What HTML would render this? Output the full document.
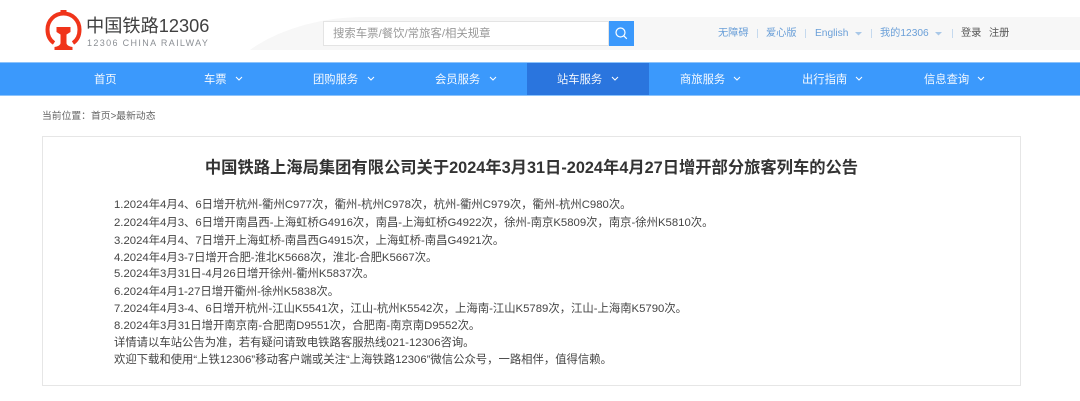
<!DOCTYPE html>
<html lang="zh"><head><meta charset="utf-8"><style>
*{margin:0;padding:0;box-sizing:border-box}
html,body{width:1080px;height:401px;overflow:hidden;background:#fff}
body{position:relative;font-family:"Liberation Sans","Noto Sans CJK SC",sans-serif;color:#333}
.a{position:absolute;white-space:nowrap}
.nav{left:0;top:62px;width:1080px;height:34px;background:#3b99fc;border-top:1px solid #8cc3fb;border-bottom:1px solid #8cc3fb}
.n{position:absolute;top:72px;color:#fff;font-size:11.3px;line-height:16px;white-space:nowrap;opacity:.95}
.c{position:absolute;top:76px}
.t{position:absolute;font-size:10.2px;line-height:14px;white-space:nowrap;top:27px;color:#6a9fd8}
.l{position:absolute;left:114px;font-size:11.35px;line-height:14px;color:#444;white-space:nowrap}
</style></head><body>
<svg class="a" style="left:45px;top:9px" width="38" height="42" viewBox="0 0 38 42"><path d="M9 34C4.500 31 2.500 26 2.500 20.500C2.500 11.500 9.500 4.500 18.500 4.500C27.500 4.500 34.500 11.500 34.500 20.500C34.500 26 32.500 31 28 34" fill="none" stroke="#f0341a" stroke-width="4"/><rect x="15.500" y="1" width="6" height="4" fill="#f0341a"/><path d="M11.500 18H25.500V23L21.500 25.500V34C21.500 36 24 37.500 27.500 38V41H9.500V38C13 37.500 15.500 36 15.500 34V25.500L11.500 23Z" fill="#f0341a"/></svg>
<div class="a" style="left:86px;top:13px;font-size:18.2px;line-height:26px;color:#404040;">中国铁路12306</div>
<div class="a" style="left:87px;top:37px;font-size:9px;line-height:12px;letter-spacing:1.36px;color:#8b8f94">12306 CHINA RAILWAY</div>
<svg class="a" style="left:245px;top:17px" width="835" height="33"><path d="M5 33C25 18 65 1 115 0H835V33Z" fill="#f7f7f7"/></svg>
<div class="a" style="left:323px;top:21px;width:286px;height:25px;background:#fff;border:1px solid #e4e4e4"></div>
<div class="a" style="left:333px;top:27px;font-size:11.4px;line-height:14px;color:#999">搜索车票/餐饮/常旅客/相关规章</div>
<div class="a" style="left:609px;top:21px;width:25px;height:25px;background:#3b99fc"></div>
<svg class="a" style="left:614px;top:26px" width="15" height="15" fill="none" stroke="#fff" stroke-width="1.200"><circle cx="6.500" cy="6.500" r="4.500"/><path d="M9.800 9.800L12.800 12.800"/></svg>
<div class="t" style="left:718px">无障碍</div><div class="t" style="left:766px">爱心版</div>
<div class="t" style="left:815px">English</div><div class="t" style="left:880px">我的12306</div>
<div class="t" style="left:961px;color:#555">登录</div><div class="t" style="left:989px;color:#555">注册</div>
<div class="a" style="left:757px;top:29px;width:1px;height:9px;background:#c5d9ee"></div><div class="a" style="left:805px;top:29px;width:1px;height:9px;background:#c5d9ee"></div><div class="a" style="left:871px;top:29px;width:1px;height:9px;background:#c5d9ee"></div><div class="a" style="left:952px;top:29px;width:1px;height:9px;background:#c5d9ee"></div>
<svg class="a" style="left:855px;top:32px" width="7" height="4"><path d="M0 0H7L3.500 3.500Z" fill="#a9c8e8"/></svg>
<svg class="a" style="left:935px;top:32px" width="7" height="4"><path d="M0 0H7L3.500 3.500Z" fill="#a9c8e8"/></svg>
<div class="a nav"></div>
<div class="a" style="left:527px;top:63px;width:122px;height:32px;background:#2a75de"></div>
<div class="n" style="left:94px">首页</div>
<div class="n" style="left:204px">车票</div><div class="n" style="left:313px">团购服务</div><div class="n" style="left:435px">会员服务</div><div class="n" style="left:557px">站车服务</div><div class="n" style="left:680px">商旅服务</div><div class="n" style="left:802px">出行指南</div><div class="n" style="left:924px">信息查询</div>
<svg class="c" style="left:235px" width="8" height="6" fill="none" stroke="#fff"><path d="M1 1L4 4L7 1"/></svg>
<svg class="c" style="left:367px" width="8" height="6" fill="none" stroke="#fff"><path d="M1 1L4 4L7 1"/></svg>
<svg class="c" style="left:489px" width="8" height="6" fill="none" stroke="#fff"><path d="M1 1L4 4L7 1"/></svg>
<svg class="c" style="left:611px" width="8" height="6" fill="none" stroke="#fff"><path d="M1 1L4 4L7 1"/></svg>
<svg class="c" style="left:733px" width="8" height="6" fill="none" stroke="#fff"><path d="M1 1L4 4L7 1"/></svg>
<svg class="c" style="left:855px" width="8" height="6" fill="none" stroke="#fff"><path d="M1 1L4 4L7 1"/></svg>
<svg class="c" style="left:977px" width="8" height="6" fill="none" stroke="#fff"><path d="M1 1L4 4L7 1"/></svg>
<div class="a" style="left:42px;top:109px;font-size:9.8px;line-height:16px;color:#666">当前位置：首页&gt;最新动态</div>
<div class="a" style="left:42px;top:136px;width:979px;height:250px;border:1px solid #e6e6e6"></div>
<div class="a" style="left:42px;top:158px;width:979px;text-align:center;font-size:16.3px;line-height:20px;font-weight:700;color:#333">中国铁路上海局集团有限公司关于2024年3月31日-2024年4月27日增开部分旅客列车的公告</div>
<div class="l" style="top:198px">1.2024年4月4、6日增开杭州-衢州C977次，衢州-杭州C978次，杭州-衢州C979次，衢州-杭州C980次。</div>
<div class="l" style="top:216px">2.2024年4月3、6日增开南昌西-上海虹桥G4916次，南昌-上海虹桥G4922次，徐州-南京K5809次，南京-徐州K5810次。</div>
<div class="l" style="top:234px">3.2024年4月4、7日增开上海虹桥-南昌西G4915次，上海虹桥-南昌G4921次。</div>
<div class="l" style="top:251px">4.2024年4月3-7日增开合肥-淮北K5668次，淮北-合肥K5667次。</div>
<div class="l" style="top:267px">5.2024年3月31日-4月26日增开徐州-衢州K5837次。</div>
<div class="l" style="top:285px">6.2024年4月1-27日增开衢州-徐州K5838次。</div>
<div class="l" style="top:302px">7.2024年4月3-4、6日增开杭州-江山K5541次，江山-杭州K5542次，上海南-江山K5789次，江山-上海南K5790次。</div>
<div class="l" style="top:319px">8.2024年3月31日增开南京南-合肥南D9551次，合肥南-南京南D9552次。</div>
<div class="l" style="top:336px">详情请以车站公告为准，若有疑问请致电铁路客服热线021-12306咨询。</div>
<div class="l" style="top:353px">欢迎下载和使用“上铁12306”移动客户端或关注“上海铁路12306”微信公众号，一路相伴，值得信赖。</div>
</body></html>
